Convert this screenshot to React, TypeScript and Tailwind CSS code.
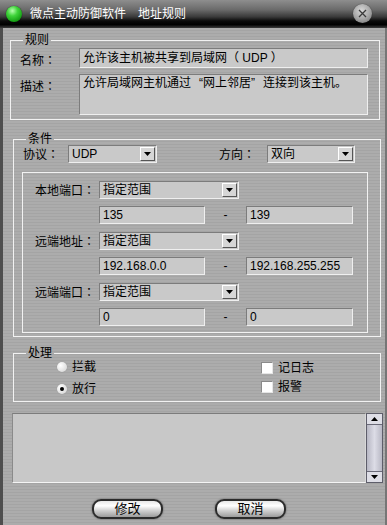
import React from 'react';

const FONT = "font-['Liberation_Sans','Noto_Sans_CJK_SC',sans-serif]";
const SUNKEN = 'bg-[#c9c9c9] border border-t-[#7c7c7c] border-l-[#7c7c7c] border-b-[#efefef] border-r-[#efefef]';

// centred full-width colon, as in the original dialog font
const Label = ({ text }: { text: string }) => (
  <>
    {text}
    <span className="font-['Noto_Sans_CJK_TC',sans-serif]">：</span>
  </>
);

const Arrow = ({ up = false }: { up?: boolean }) => (
  <svg width="7" height="4" viewBox="0 0 7 4">
    <path d={up ? 'M0 4h7L3.5 0z' : 'M0 0h7L3.5 4z'} fill="#000" />
  </svg>
);

const Select = ({ value, className }: { value: string; className: string }) => (
  <div className={`h-[18px] flex items-center justify-between ${SUNKEN} ${className}`}>
    <span className="pl-[3px] leading-[16px]">{value}</span>
    <div className="w-[15px] h-[14px] mr-[1px] flex items-center justify-center bg-[#d6d6d6] border border-t-white border-l-white border-b-[#555] border-r-[#555]">
      <Arrow />
    </div>
  </div>
);

const Field = ({ value, className }: { value: string; className: string }) => (
  <div className={`h-[18px] pl-[3px] leading-[16px] ${SUNKEN} ${className}`}>{value}</div>
);

const Group = ({ title, className, children }: { title: string; className: string; children: React.ReactNode }) => (
  <fieldset className={`border border-[#f2f2f2] ${className}`}>
    <legend className="ml-[12px] px-[2px] h-[12px] leading-[12px]">{title}</legend>
    {children}
  </fieldset>
);

const Radio = ({ checked, label }: { checked?: boolean; label: string }) => (
  <div className="h-[16px] flex items-center gap-[5px]">
    <div className="w-[10px] h-[10px] rounded-full flex items-center justify-center bg-[radial-gradient(circle_at_35%_35%,#ffffff,#d0d0d0)] shadow-[0_0_1px_#888]">
      {checked && <div className="w-[4px] h-[4px] rounded-full bg-black" />}
    </div>
    <span className="leading-[14px]">{label}</span>
  </div>
);

const Check = ({ label, className }: { label: string; className: string }) => (
  <div className={`h-[16px] flex items-center gap-[5px] ${className}`}>
    <div className="w-[12px] h-[12px] bg-white border border-t-[#8a8a8a] border-l-[#8a8a8a] border-b-[#e6e6e6] border-r-[#e6e6e6]" />
    <span className="leading-[14px]">{label}</span>
  </div>
);

const PillButton = ({ label }: { label: string }) => (
  <button className="w-[71px] h-[20px] rounded-[9px] border-2 border-[#2b2b2b] bg-[linear-gradient(180deg,#e8e8e8_0%,#ffffff_30%,#d0d0d0_60%,#9c9c9c_100%)] shadow-[0_0_2px_#555] flex items-center justify-center leading-[14px] text-[13px] text-black">
    {label}
  </button>
);

export default function App() {
  return (
    <div className={`w-[387px] h-[525px] flex flex-col text-[12px] text-black ${FONT}`}>
      {/* title bar */}
      <div className="h-[28px] shrink-0 flex items-center pl-[6px] pr-[15px] pb-[1px] bg-[linear-gradient(180deg,#8e8e8e_0%,#6a6a6a_35%,#3a3a3a_60%,#0a0a0a_75%,#000_88%,#3c3c3c_100%)]">
        <div className="w-[16px] h-[16px] rounded-full bg-[radial-gradient(circle_at_40%_30%,#b8ffb0_0%,#3fd43a_35%,#139c12_75%,#0a5a0a_100%)] shadow-[0_0_1px_#000]" />
        <span className="ml-[8px] text-white leading-[14px]">微点主动防御软件</span>
        <span className="ml-[12px] text-white leading-[14px]">地址规则</span>
        <div className="ml-auto w-[19px] h-[19px] rounded-full flex items-center justify-center bg-[radial-gradient(circle_at_45%_35%,#d8d8d8_0%,#a8a8a8_50%,#6c6c6c_100%)] shadow-[0_0_1px_#222]">
          <svg width="9" height="9" viewBox="0 0 9 9">
            <path d="M1 1L8 8M8 1L1 8" stroke="#3a3a3a" strokeWidth="1.3" />
          </svg>
        </div>
      </div>

      {/* body */}
      <div className="flex-1 flex flex-col border-l-[3px] border-r-[2px] border-l-[#4e4e4e] border-r-[#767676] bg-[repeating-linear-gradient(180deg,#acacac_0px,#acacac_2px,#a4a4a4_2px,#a4a4a4_3px)]">
        <Group title="规则" className="mt-[6px] ml-[7px] w-[370px] pb-[4px]">
          <div className="mt-[2px] flex">
            <div className="w-[68px] pl-[9px] pt-[5px] leading-[14px]"><Label text="名称" /></div>
            <div className={`w-[289px] h-[20px] pl-[3px] pt-[2px] leading-[14px] ${SUNKEN}`}>允许该主机被共享到局域网（ UDP ）</div>
          </div>
          <div className="mt-[6px] flex">
            <div className="w-[68px] pl-[9px] pt-[5px] leading-[14px]"><Label text="描述" /></div>
            <div className={`w-[289px] h-[41px] pl-[3px] pt-[1px] leading-[14px] ${SUNKEN}`}>
              允许局域网主机通过<span className="inline-block w-[12px] text-right">“</span>网上邻居<span className="inline-block w-[12px] text-left">”</span>连接到该主机。
            </div>
          </div>
        </Group>

        <Group title="条件" className="mt-[13px] ml-[10px] w-[368px] pb-[3px]">
          <div className="flex items-center">
            <div className="w-[54px] pl-[9px] leading-[14px]"><Label text="协议" /></div>
            <Select value="UDP" className="w-[89px]" />
            <div className="ml-[62px] w-[48px] leading-[14px]"><Label text="方向" /></div>
            <Select value="双向" className="w-[88px]" />
          </div>

          <div className="mt-[9px] ml-[8px] w-[346px] border border-[#f2f2f2] pt-[8px] pb-[6px]">
            <div className="flex items-center">
              <div className="w-[76px] pl-[12px] leading-[14px]"><Label text="本地端口" /></div>
              <Select value="指定范围" className="w-[140px]" />
            </div>
            <div className="mt-[7px] flex items-center">
              <div className="w-[76px]" />
              <Field value="135" className="w-[106px]" />
              <div className="w-[41px] text-center leading-[14px]">-</div>
              <Field value="139" className="w-[107px]" />
            </div>
            <div className="mt-[8px] flex items-center">
              <div className="w-[76px] pl-[12px] leading-[14px]"><Label text="远端地址" /></div>
              <Select value="指定范围" className="w-[140px]" />
            </div>
            <div className="mt-[7px] flex items-center">
              <div className="w-[76px]" />
              <Field value="192.168.0.0" className="w-[106px]" />
              <div className="w-[41px] text-center leading-[14px]">-</div>
              <Field value="192.168.255.255" className="w-[107px]" />
            </div>
            <div className="mt-[8px] flex items-center">
              <div className="w-[76px] pl-[12px] leading-[14px]"><Label text="远端端口" /></div>
              <Select value="指定范围" className="w-[140px]" />
            </div>
            <div className="mt-[7px] flex items-center">
              <div className="w-[76px]" />
              <Field value="0" className="w-[106px]" />
              <div className="w-[41px] text-center leading-[14px]">-</div>
              <Field value="0" className="w-[107px]" />
            </div>
          </div>
        </Group>

        <Group title="处理" className="mt-[10px] ml-[10px] w-[368px] pb-[4px]">
          <div className="flex pl-[43px]">
            <div className="w-[204px] flex flex-col gap-[6px]">
              <Radio label="拦截" />
              <Radio checked label="放行" />
            </div>
            <div className="flex flex-col">
              <Check label="记日志" className="mt-[1px]" />
              <Check label="报警" className="mt-[3px]" />
            </div>
          </div>
        </Group>

        {/* log area */}
        <div className="mt-[11px] ml-[9px] flex h-[70px]">
          <div className="w-[354px] h-full bg-[#c8c8c8] border border-t-[#7c7c7c] border-l-[#8a8a8a] border-b-[#f4f4f4] border-r-[#d8d8d8]" />
          <div className="w-[17px] h-full flex flex-col border border-[#5e5e6a] bg-[linear-gradient(90deg,#b8b8c4_0%,#dcdce6_50%,#b8b8c4_100%)]">
            <div className="h-[11px] flex items-center justify-center bg-[#dedee6] border-b border-[#6a6a78]">
              <Arrow up />
            </div>
            <div className="flex-1" />
            <div className="h-[11px] flex items-center justify-center bg-[#dedee6] border-t border-[#6a6a78]">
              <Arrow />
            </div>
          </div>
        </div>

        {/* buttons */}
        <div className="mt-[16px] pl-[89px] flex gap-[52px]">
          <PillButton label="修改" />
          <PillButton label="取消" />
        </div>
      </div>
    </div>
  );
}
